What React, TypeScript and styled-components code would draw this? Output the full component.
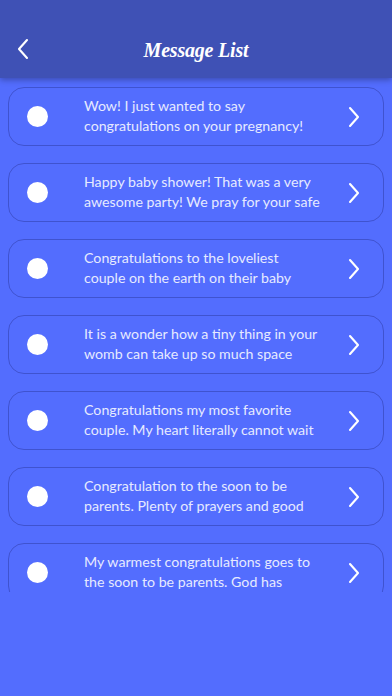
import React from "react";
import styled, { createGlobalStyle } from "styled-components";

const Global = createGlobalStyle`
  html, body { margin: 0; padding: 0; background: #536dfe; }
  body { width: 392px; height: 696px; overflow: hidden; font-family: "Lato", "Noto Sans", sans-serif; }
`;

const Screen = styled.div`
  width: 392px;
  height: 696px;
  display: flex;
  flex-direction: column;
  background: #536dfe;
  position: relative;
`;

const Header = styled.header`
  height: 78px;
  flex: 0 0 78px;
  background: #3f51b5;
  display: flex;
  align-items: center;
  justify-content: center;
  padding-top: 22px;
  box-sizing: border-box;
  position: relative;
  z-index: 2;
  box-shadow: 0 2px 6px rgba(0, 0, 0, 0.3);
`;

const BackButton = styled.button`
  position: absolute;
  left: 12px;
  top: 36px;
  width: 22px;
  height: 26px;
  padding: 0;
  border: none;
  background: none;
  display: flex;
  align-items: center;
  justify-content: center;
`;

const Title = styled.h1`
  margin: 0;
  color: #ffffff;
  font-family: "Liberation Serif", serif;
  font-style: italic;
  font-weight: bold;
  font-size: 20px;
  letter-spacing: -0.2px;
`;

const List = styled.div`
  height: 514px;
  overflow: hidden;
  padding: 9px 8px 0 8px;
  display: flex;
  flex-direction: column;
  gap: 17px;
  box-sizing: border-box;
`;

const Card = styled.div`
  flex: 0 0 59px;
  height: 59px;
  box-sizing: border-box;
  border: 1px solid rgba(40, 50, 150, 0.45);
  border-radius: 16px;
  display: flex;
  align-items: center;
  padding: 0 22px 0 18px;
`;

const Dot = styled.span`
  width: 21px;
  height: 21px;
  border-radius: 50%;
  background: #ffffff;
  flex: 0 0 21px;
`;

const Text = styled.p`
  margin: -1px 0 0 36px;
  flex: 1;
  color: #e6eaff;
  font-family: "Lato", "Noto Sans", sans-serif;
  font-size: 14.2px;
  line-height: 20px;
  white-space: nowrap;
  overflow: hidden;
`;

const Chevron = ({ dir }: { dir: "left" | "right" }) => (
  <svg width="14" height="22" viewBox="0 0 14 22" fill="none">
    <path
      d={dir === "right" ? "M3 2 L11 11 L3 20" : "M11 2 L3 11 L11 20"}
      stroke="#ffffff"
      strokeWidth="2.1"
      strokeLinecap="round"
      strokeLinejoin="round"
    />
  </svg>
);

const messages = [
  ["Wow! I just wanted to say", "congratulations on your pregnancy!"],
  ["Happy baby shower! That was a very", "awesome party! We pray for your safe"],
  ["Congratulations to the loveliest", "couple on the earth on their baby"],
  ["It is a wonder how a tiny thing in your", "womb can take up so much space"],
  ["Congratulations my most favorite", "couple. My heart literally cannot wait"],
  ["Congratulation to the soon to be", "parents. Plenty of prayers and good"],
  ["My warmest congratulations goes to", "the soon to be parents. God has"],
];

export default function App() {
  return (
    <>
      <Global />
      <Screen>
        <Header>
          <BackButton aria-label="Back">
            <Chevron dir="left" />
          </BackButton>
          <Title>Message List</Title>
        </Header>
        <List>
          {messages.map((m, i) => (
            <Card key={i}>
              <Dot />
              <Text>
                {m[0]}
                <br />
                {m[1]}
              </Text>
              <Chevron dir="right" />
            </Card>
          ))}
        </List>
      </Screen>
    </>
  );
}
